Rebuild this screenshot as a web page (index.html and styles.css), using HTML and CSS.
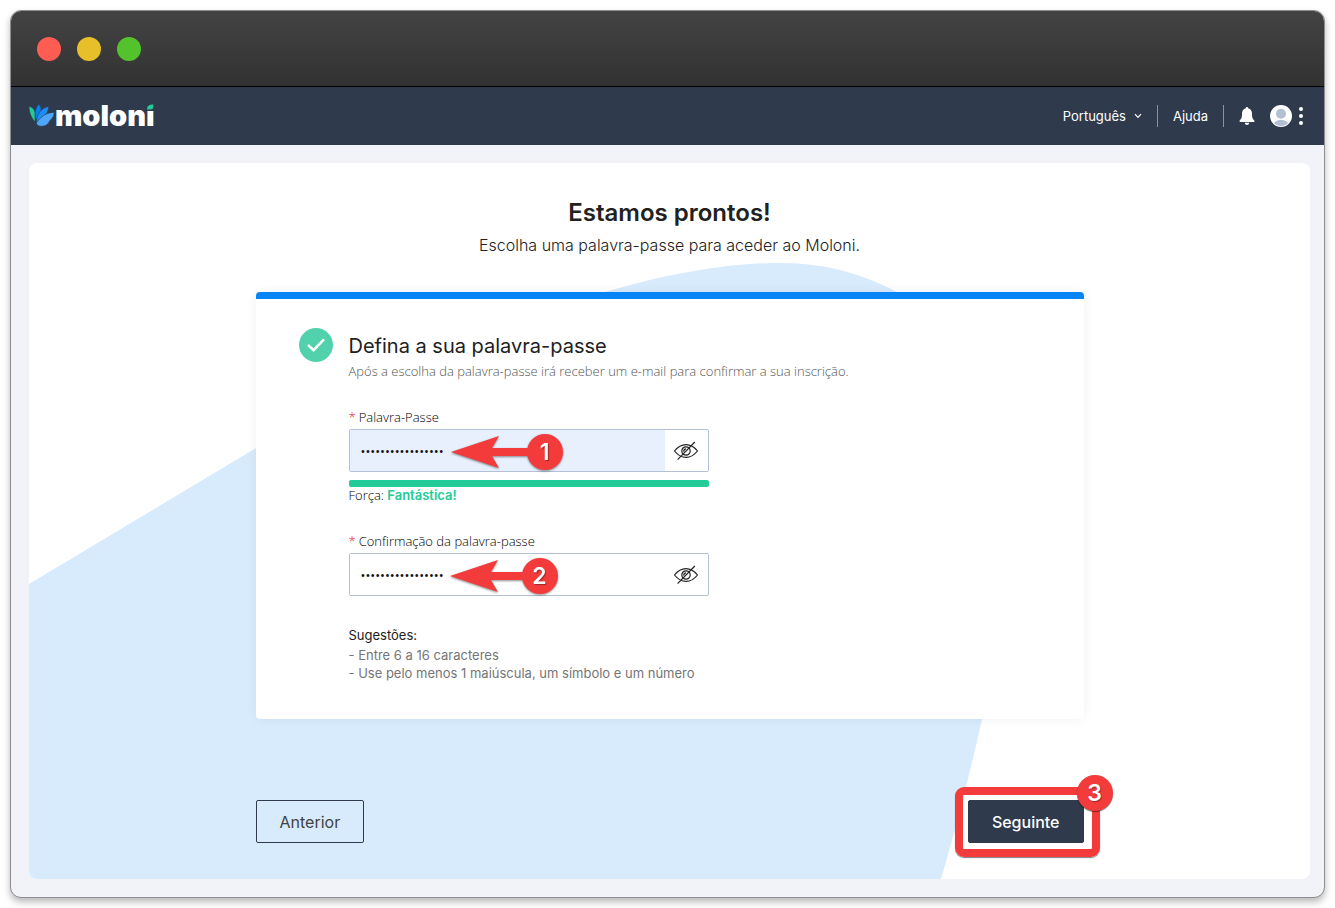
FILE: index.html
```html
<!DOCTYPE html>
<html lang="pt">
<head>
<meta charset="utf-8">
<meta name="viewport" content="width=device-width, initial-scale=1">
<title>Moloni</title>
<link rel="stylesheet" href="styles.css">
</head>
<body>
<div class="window">
  <div class="titlebar">
    <span class="light light-close"></span>
    <span class="light light-min"></span>
    <span class="light light-max"></span>
  </div>

  <header class="topbar">
    <a class="logo" href="#">
      <svg class="logo-mark" viewBox="0 0 26 24" width="26" height="24" aria-hidden="true" stroke="#2f3a4d" stroke-width="0.6">
        <path fill="#22cb97" d="M0.1 2.4C4 3 6.2 6.2 6.3 10.2L6 18C2.4 13.6 -0.2 8.6 0.1 2.4Z"/>
        <path fill="#0780f2" d="M9.7 0.2C13.6 3.6 12.6 8.6 7 16.4C5.2 9.6 6 4 9.7 0.2Z"/>
        <path fill="#1e8cf5" d="M19.5 2.5C20 8.4 15.6 12.4 7.2 18.6C8 9.4 12 4.2 19.5 2.5Z"/>
        <path fill="#4ea6fa" d="M25.2 8.5C24.8 15 20.2 16 19.6 19C16.6 22.6 12 23 9 21.4C7.2 20 7 18.8 8.4 17.4C13.4 11.6 18 8.4 25.2 8.5Z"/>
      </svg>
      <span class="logo-text">moloni<svg class="logo-leaf" viewBox="0 0 9 9" width="9" height="9" aria-hidden="true"><path fill="#2f3a4d" d="M0 0H9V9H0Z"/><path fill="#22cb97" d="M1 7.4C1 4 3.2 2.6 7.4 2.6V4.4C7.4 6.4 6.2 7.4 4.2 7.4Z"/></svg></span>
    </a>
    <nav class="topnav">
      <button class="language" type="button">Português
        <svg viewBox="0 0 8 6" width="8" height="6" aria-hidden="true"><path d="M1 1.2L4 4.4L7 1.2" fill="none" stroke="#fff" stroke-width="1.2"/></svg>
      </button>
      <a class="help" href="#">Ajuda</a>
      <button class="icon-button bell" type="button" aria-label="Notificações">
        <svg viewBox="0 0 16 18" width="16" height="18" aria-hidden="true"><path fill="#fff" d="M8 0C8.8 0 9.2 0.6 9.2 1.3C11.8 1.9 13 4 13 6.6C13 10.6 13.6 12 15.3 13.4C15.7 14.2 15.3 14.9 14.6 14.9H1.4C0.7 14.9 0.3 14.2 0.7 13.4C2.4 12 3 10.6 3 6.6C3 4 4.2 1.9 6.8 1.3C6.8 0.6 7.2 0 8 0ZM5.7 15.8H10.3C10 17.2 9.1 18 8 18S6 17.2 5.7 15.8Z"/></svg>
      </button>
      <button class="icon-button" type="button" aria-label="Conta">
        <svg viewBox="0 0 22 22" width="22" height="22" aria-hidden="true"><circle cx="11" cy="11" r="11" fill="#fff"/><circle cx="11" cy="8.8" r="5" fill="#b3c0d3"/><path fill="#b3c0d3" d="M3.9 18.2C5.4 16 8 14.8 11 14.8S16.6 16 18.1 18.2A10 10 0 0 1 3.9 18.2Z"/></svg>
      </button>
      <button class="icon-button more" type="button" aria-label="Mais opções">
        <svg viewBox="0 0 4 18" width="4" height="18" aria-hidden="true" fill="#fff"><circle cx="2" cy="2" r="2"/><circle cx="2" cy="9" r="2"/><circle cx="2" cy="16" r="2"/></svg>
      </button>
    </nav>
  </header>

  <main class="panel">
    <svg class="blob" viewBox="0 0 1281 716" preserveAspectRatio="none" aria-hidden="true">
      <path fill="#d8ebfd" d="M0 421L227 285C340 218 470 157 576 129C640 110 700 100 751 100C800 100 835 112 868 129C1000 195 990 390 953 556C940 615 927 665 912 716H0Z"/>
    </svg>
    <h1 class="title">Estamos prontos!</h1>
    <p class="subtitle">Escolha uma palavra-passe para aceder ao Moloni.</p>

    <form class="step">
      <section class="card">
        <svg class="check" viewBox="0 0 34 34" width="34" height="34" aria-hidden="true"><circle cx="17" cy="17" r="17" fill="#52d2ac"/><path d="M9 17L14.6 22.2L25 11.4" fill="none" stroke="#fff" stroke-width="2.4"/></svg>
        <div class="card-body">
          <h2 class="card-title">Defina a sua palavra-passe</h2>
          <p class="card-note">Após a escolha da palavra-passe irá receber um e-mail para confirmar a sua inscrição.</p>

          <div class="field">
            <label class="label" for="password"><span class="required">*</span>Palavra-Passe</label>
            <div class="control">
              <input class="input input-filled" id="password" type="password" value="Moloni#2023-Forte">
              <button class="reveal" type="button" aria-label="Mostrar palavra-passe">
                <svg viewBox="0 0 26 20" width="26" height="20" aria-hidden="true" fill="none" stroke="#222" stroke-width="1.2"><path d="M1.5 10C5 5.6 8.6 3.6 13 3.6S21 5.6 24.5 10C21 14.4 17.4 16.4 13 16.4S5 14.4 1.5 10Z"/><circle cx="13" cy="10" r="4.2"/><path d="M10.8 10.6A2.3 2.3 0 0 1 13 7.9"/><path d="M4.6 18.6L21.8 1"/></svg>
              </button>
              <div class="pointer pointer-one">
                <svg viewBox="0 0 80 34" width="80" height="34" aria-hidden="true"><path fill="#f33b3b" d="M0 17L48 1L41 13H80V21H41L48 33Z"/></svg>
                <span class="badge">1</span>
              </div>
            </div>
            <div class="strength-bar"></div>
            <p class="strength">Força: <strong class="strength-value">Fantástica!</strong></p>
          </div>

          <div class="field">
            <label class="label" for="confirm"><span class="required">*</span>Confirmação da palavra-passe</label>
            <div class="control">
              <input class="input" id="confirm" type="password" value="Moloni#2023-Forte">
              <button class="reveal" type="button" aria-label="Mostrar confirmação">
                <svg viewBox="0 0 26 20" width="26" height="20" aria-hidden="true" fill="none" stroke="#222" stroke-width="1.2"><path d="M1.5 10C5 5.6 8.6 3.6 13 3.6S21 5.6 24.5 10C21 14.4 17.4 16.4 13 16.4S5 14.4 1.5 10Z"/><circle cx="13" cy="10" r="4.2"/><path d="M10.8 10.6A2.3 2.3 0 0 1 13 7.9"/><path d="M4.6 18.6L21.8 1"/></svg>
              </button>
              <div class="pointer pointer-two">
                <svg viewBox="0 0 76 34" width="76" height="34" aria-hidden="true"><path fill="#f33b3b" d="M0 17L48 1L41 13H76V21H41L48 33Z"/></svg>
                <span class="badge">2</span>
              </div>
            </div>
          </div>

          <div class="tips">
            <p class="tips-title">Sugestões:</p>
            <p>- Entre 6 a 16 caracteres</p>
            <p>- Use pelo menos 1 maiúscula, um símbolo e um número</p>
          </div>
        </div>
      </section>

      <div class="actions">
        <button class="button button-outline" type="button">Anterior</button>
        <div class="next">
          <button class="button button-solid" type="submit">Seguinte</button>
          <div class="highlight"></div>
          <span class="badge badge-corner">3</span>
        </div>
      </div>
    </form>
  </main>
</div>
</body>
</html>
```
FILE: styles.css
```css
* {
  box-sizing: border-box;
}

body {
  margin: 0;
  padding: 10px;
  background: #fff;
  color: #212121;
  font-family: Inter, "Open Sans", sans-serif;
  font-size: 13px;
  line-height: 18px;
}

h1,
h2,
p {
  margin: 0;
}

button {
  padding: 0;
  border: 0;
  background: none;
  color: inherit;
  font: inherit;
  cursor: pointer;
}

svg {
  display: block;
}

.window {
  display: flex;
  flex-direction: column;
  min-height: calc(100vh - 20px);
  border: 1px solid #8e8e92;
  border-radius: 11px;
  background: #f2f3f9;
  box-shadow: 0 4px 7px rgba(0, 0, 0, 0.28);
  overflow: hidden;
}

.titlebar {
  display: flex;
  align-items: center;
  gap: 16px;
  height: 76px;
  padding-left: 26px;
  border-bottom: 1px solid #000;
  background: linear-gradient(#434343, #323232);
}

.light {
  width: 24px;
  height: 24px;
  border-radius: 50%;
}

.light-close {
  background: #ff5c54;
}

.light-min {
  background: #e6bf2a;
}

.light-max {
  background: #54c22d;
}

.topbar {
  display: flex;
  align-items: center;
  justify-content: space-between;
  height: 58px;
  padding: 0 21px 0 18px;
  background: #2f3a4d;
  color: #fff;
}

.logo {
  display: flex;
  align-items: center;
  color: #fff;
  text-decoration: none;
}

.logo-text {
  position: relative;
  font-size: 29px;
  font-weight: 900;
  line-height: 30px;
}

.logo-leaf {
  position: absolute;
  top: 1px;
  right: 0;
}

.topnav {
  display: flex;
  align-items: center;
}

.language,
.help {
  display: flex;
  align-items: center;
  gap: 8px;
  height: 22px;
  padding-right: 15px;
  border-right: 1px solid #8392ad;
  color: #fff;
  font-size: 13px;
  text-decoration: none;
}

.help {
  padding-left: 15px;
}

.bell {
  margin: 0 15px;
}

.more {
  margin-left: 7px;
}

.panel {
  position: relative;
  flex: 1;
  margin: 18px 14px 18px 18px;
  padding: 34px 20px 36px;
  border-radius: 8px;
  background: #fff;
  overflow: hidden;
  text-align: center;
}

.blob {
  position: absolute;
  inset: 0;
  width: 100%;
  height: 100%;
}

.title,
.subtitle,
.step {
  position: relative;
}

.title {
  font-size: 24px;
  font-weight: 600;
  line-height: 32px;
}

.subtitle {
  margin-top: 4px;
  font-size: 16px;
  font-weight: 300;
  line-height: 24px;
}

.step {
  max-width: 828px;
  margin: 35px auto 0;
  text-align: left;
}

.card {
  display: flex;
  gap: 16px;
  padding: 29px 43px 37px;
  border-top: 7px solid #0784f5;
  border-radius: 4px;
  background: #fff;
  box-shadow: 0 0 12px rgba(0, 0, 0, 0.06);
}

.check {
  flex: none;
}

.card-body {
  padding-top: 4px;
}

.card-title {
  font-size: 20px;
  font-weight: 400;
  line-height: 28px;
}

.card-note {
  margin-top: 2px;
  color: #555;
  font-family: "Open Sans", sans-serif;
  font-weight: 300;
}

.field {
  max-width: 360px;
  margin-top: 28px;
}

.label {
  display: flex;
  gap: 3px;
  margin-bottom: 3px;
  color: #000;
  font-family: "Open Sans", sans-serif;
  font-weight: 300;
}

.required {
  color: #f0203c;
}

.control {
  position: relative;
  display: flex;
  height: 43px;
  border: 1px solid #b4c0d6;
  border-radius: 2px;
}

.input {
  flex: 1;
  min-width: 0;
  padding: 0 11px;
  border: 0;
  background: #fff;
  color: #111;
  font-family: "Open Sans", sans-serif;
  font-size: 13px;
}

.input-filled {
  background: #e8f0fe;
}

.reveal {
  display: flex;
  align-items: center;
  justify-content: center;
  width: 43px;
}

.pointer {
  position: absolute;
  top: 4px;
  display: flex;
  align-items: center;
  pointer-events: none;
  filter: drop-shadow(0 1px 1px rgba(0, 0, 0, 0.45));
}

.pointer-one {
  left: 101px;
}

.pointer-two {
  left: 100px;
}

.badge {
  width: 36px;
  height: 36px;
  border-radius: 50%;
  background: #f33b3b;
  color: #fff;
  font-size: 23px;
  font-weight: 600;
  line-height: 36px;
  text-align: center;
  text-shadow: 1px 1px 1px rgba(0, 0, 0, 0.35);
}

.pointer .badge {
  margin-left: -4px;
}

.strength-bar {
  height: 7px;
  margin-top: 8px;
  border-radius: 2px;
  background: #22cb97;
}

.strength {
  font-family: "Open Sans", sans-serif;
  font-weight: 300;
  line-height: 17px;
  color: #000;
}

.strength-value {
  color: #22cb97;
  font-family: Inter, sans-serif;
  font-weight: 600;
}

.tips {
  margin-top: 30px;
  color: #757575;
}

.tips-title {
  margin-bottom: 2px;
  color: #212121;
}

.actions {
  display: flex;
  align-items: center;
  justify-content: space-between;
  margin-top: 81px;
}

.button {
  display: block;
  height: 43px;
  padding: 0 23px;
  border: 1px solid #2f3a4d;
  border-radius: 2px;
  font-size: 16px;
}

.button-outline {
  color: #424242;
}

.button-solid {
  background: #2f3a4d;
  color: #fff;
  font-weight: 500;
}

.next {
  position: relative;
}

.highlight {
  position: absolute;
  inset: -13px -16px -14px -13px;
  border: 8px solid #f33b3b;
  border-radius: 9px;
  box-shadow: 0 0 0 5px #fff inset, 0 1px 1px rgba(0, 0, 0, 0.5);
  pointer-events: none;
}

.badge-corner {
  position: absolute;
  top: -25px;
  right: -29px;
  box-shadow: 0 1px 1px rgba(0, 0, 0, 0.5);
}
```
